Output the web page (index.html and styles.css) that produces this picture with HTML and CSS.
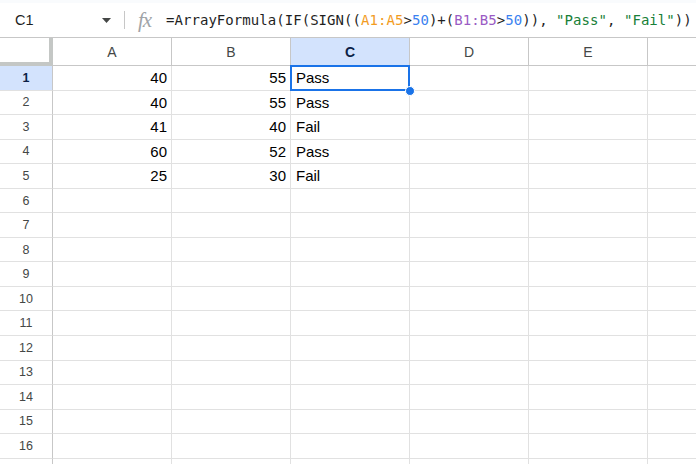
FILE: index.html
```html
<!DOCTYPE html>
<html>
<head>
<meta charset="utf-8">
<link rel="stylesheet" href="styles.css">
</head>
<body>
<div class="fbar">
  <div class="namebox">
    <span class="ref">C1</span>
    <svg class="caret" width="9" height="5" viewBox="0 0 9 5"><path d="M0 0h9L4.5 5z" fill="#444746"/></svg>
  </div>
  <div class="sep"></div>
  <div class="fx">fx</div>
  <div class="formula">=ArrayFormula(IF(SIGN((<span class="o">A1:A5</span>&gt;<span class="b">50</span>)+(<span class="p">B1:B5</span>&gt;<span class="b">50</span>)), <span class="g">"Pass"</span>, <span class="g">"Fail"</span>))</div>
</div>
<div class="sheet">
  <div class="corner"></div>
  <div class="ch">A</div><div class="ch">B</div><div class="ch sel">C</div><div class="ch">D</div><div class="ch">E</div><div class="ch last"></div>

  <div class="rh sel">1</div><div class="c n">40</div><div class="c n">55</div><div class="c active">Pass<span class="handle"></span></div><div class="c"></div><div class="c"></div><div class="c last"></div>
  <div class="rh">2</div><div class="c n">40</div><div class="c n">55</div><div class="c">Pass</div><div class="c"></div><div class="c"></div><div class="c last"></div>
  <div class="rh">3</div><div class="c n">41</div><div class="c n">40</div><div class="c">Fail</div><div class="c"></div><div class="c"></div><div class="c last"></div>
  <div class="rh">4</div><div class="c n">60</div><div class="c n">52</div><div class="c">Pass</div><div class="c"></div><div class="c"></div><div class="c last"></div>
  <div class="rh">5</div><div class="c n">25</div><div class="c n">30</div><div class="c">Fail</div><div class="c"></div><div class="c"></div><div class="c last"></div>
  <div class="rh">6</div><div class="c"></div><div class="c"></div><div class="c"></div><div class="c"></div><div class="c"></div><div class="c last"></div>
  <div class="rh">7</div><div class="c"></div><div class="c"></div><div class="c"></div><div class="c"></div><div class="c"></div><div class="c last"></div>
  <div class="rh">8</div><div class="c"></div><div class="c"></div><div class="c"></div><div class="c"></div><div class="c"></div><div class="c last"></div>
  <div class="rh">9</div><div class="c"></div><div class="c"></div><div class="c"></div><div class="c"></div><div class="c"></div><div class="c last"></div>
  <div class="rh">10</div><div class="c"></div><div class="c"></div><div class="c"></div><div class="c"></div><div class="c"></div><div class="c last"></div>
  <div class="rh">11</div><div class="c"></div><div class="c"></div><div class="c"></div><div class="c"></div><div class="c"></div><div class="c last"></div>
  <div class="rh">12</div><div class="c"></div><div class="c"></div><div class="c"></div><div class="c"></div><div class="c"></div><div class="c last"></div>
  <div class="rh">13</div><div class="c"></div><div class="c"></div><div class="c"></div><div class="c"></div><div class="c"></div><div class="c last"></div>
  <div class="rh">14</div><div class="c"></div><div class="c"></div><div class="c"></div><div class="c"></div><div class="c"></div><div class="c last"></div>
  <div class="rh">15</div><div class="c"></div><div class="c"></div><div class="c"></div><div class="c"></div><div class="c"></div><div class="c last"></div>
  <div class="rh">16</div><div class="c"></div><div class="c"></div><div class="c"></div><div class="c"></div><div class="c"></div><div class="c last"></div>
  <div class="rh"></div><div class="c"></div><div class="c"></div><div class="c"></div><div class="c"></div><div class="c"></div><div class="c last"></div>
</div>
</body>
</html>
```
FILE: styles.css
```css
* { box-sizing: border-box; }
html, body {
  margin: 0;
  padding: 0;
  width: 696px;
  height: 464px;
  overflow: hidden;
  background: #fff;
  font-family: "Liberation Sans", Arial, sans-serif;
}
.fbar {
  height: 38px;
  display: flex;
  align-items: center;
  border-top: 3px solid #f9fbfd;
  border-bottom: 1px solid #c7c7c7;
  background: #fff;
}
.namebox {
  display: flex;
  align-items: center;
  width: 124px;
  padding-left: 15px;
}
.ref {
  font-size: 14.5px;
  color: #1f1f1f;
  width: 87px;
}
.caret { display: block; margin-top: 1px; }
.sep {
  width: 1px;
  height: 18px;
  background: #c7c7c7;
}
.fx {
  margin-left: 13px;
  width: 28px;
  font-family: "Liberation Serif", serif;
  font-style: italic;
  font-size: 21px;
  color: #a0a4a8;
  letter-spacing: -1px;
}
.formula {
  margin-left: 0;
  font-family: "DejaVu Sans Mono", "Liberation Mono", monospace;
  font-size: 14px;
  color: #1f1f1f;
  white-space: nowrap;
  letter-spacing: 0.05px;
}
.o { color: #f29c1f; }
.b { color: #3b82f0; }
.p { color: #9a5bc4; }
.g { color: #188038; }

.sheet {
  display: grid;
  grid-template-columns: 53px repeat(5, 119px) 1fr;
  grid-template-rows: 28px repeat(17, 24.56px);
}
.corner {
  border-right: 4px solid #c4c7c5;
  border-bottom: 4px solid #c4c7c5;
}
.ch {
  display: flex;
  align-items: center;
  justify-content: center;
  font-size: 14px;
  color: #444746;
  border-right: 1px solid #c7c7c7;
  border-bottom: 1px solid #c7c7c7;
  padding-top: 1px;
}
.ch.last { border-right: none; }
.ch.sel {
  background: #d3e3fd;
  color: #0b1f47;
  font-weight: bold;
}
.rh {
  display: flex;
  align-items: center;
  justify-content: center;
  font-size: 12.5px;
  color: #444746;
  border-right: 1px solid #c7c7c7;
  border-bottom: 1px solid #e1e1e1;
}
.rh.sel {
  background: #d3e3fd;
  color: #0b1f47;
  font-weight: bold;
}
.c {
  display: flex;
  align-items: center;
  font-size: 15px;
  color: #000;
  padding: 0 4px 0 5px;
  border-right: 1px solid #e1e1e1;
  border-bottom: 1px solid #e1e1e1;
  white-space: nowrap;
}
.c.last { border-right: none; }
.c.n { justify-content: flex-end; }
.c.active { position: relative; }
.c.active::after {
  content: "";
  position: absolute;
  left: -1px;
  top: -1px;
  right: -1px;
  bottom: -1px;
  border: 2px solid #1a73e8;
}
.handle {
  position: absolute;
  right: -6px;
  bottom: -6px;
  width: 10px;
  height: 10px;
  border-radius: 50%;
  background: #1a73e8;
  border: 1px solid #fff;
  z-index: 2;
}
```
